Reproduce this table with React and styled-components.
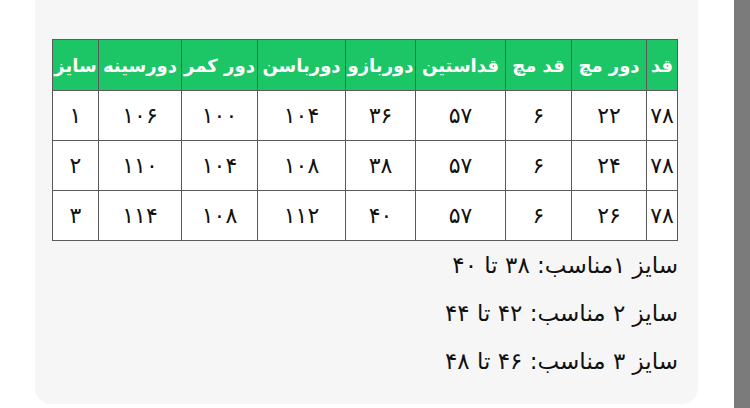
import React from "react";
import styled, { createGlobalStyle } from "styled-components";

const GlobalStyle = createGlobalStyle`
  html, body {
    margin: 0;
    padding: 0;
    background: #ffffff;
  }
  body {
    font-family: "DejaVu Sans", "Noto Sans", sans-serif;
  }
`;

const columns = [
  { title: "قد", width: 31 },
  { title: "دور مچ", width: 75 },
  { title: "قد مچ", width: 66 },
  { title: "قداستین", width: 90 },
  { title: "دوربازو", width: 70 },
  { title: "دورباسن", width: 88 },
  { title: "دور کمر", width: 76 },
  { title: "دورسینه", width: 83 },
  { title: "سایز", width: 46 },
];

const rows = [
  ["۷۸", "۲۲", "۶", "۵۷", "۳۶", "۱۰۴", "۱۰۰", "۱۰۶", "۱"],
  ["۷۸", "۲۴", "۶", "۵۷", "۳۸", "۱۰۸", "۱۰۴", "۱۱۰", "۲"],
  ["۷۸", "۲۶", "۶", "۵۷", "۴۰", "۱۱۲", "۱۰۸", "۱۱۴", "۳"],
];

const notes = [
  "سایز ۱مناسب: ۳۸ تا ۴۰",
  "سایز ۲ مناسب: ۴۲ تا ۴۴",
  "سایز ۳ مناسب: ۴۶ تا ۴۸",
];

const App = () => {
  return (
    <>
      <GlobalStyle />
      <Page>
        <Card dir="rtl">
          <SizeTable>
            <colgroup>
              {columns.map((c) => (
                <col key={c.title} style={{ width: c.width }} />
              ))}
            </colgroup>
            <thead>
              <tr>
                {columns.map((c) => (
                  <HeadCell key={c.title}>{c.title}</HeadCell>
                ))}
              </tr>
            </thead>
            <tbody>
              {rows.map((row, i) => (
                <tr key={i}>
                  {row.map((value, j) => (
                    <Cell key={j}>{value}</Cell>
                  ))}
                </tr>
              ))}
            </tbody>
          </SizeTable>
          <Notes>
            {notes.map((n) => (
              <Note key={n}>{n}</Note>
            ))}
          </Notes>
        </Card>
        <ScrollBar />
      </Page>
    </>
  );
};

const Page = styled.div`
  display: flex;
  height: 408px;
  width: 750px;
  overflow: hidden;
`;

const Card = styled.div`
  width: 663px;
  height: 404px;
  margin-left: 35px;
  box-sizing: border-box;
  padding: 39px 20px 0 18px;
  background: #f6f6f6;
  border-radius: 0 0 16px 16px;
`;

const ScrollBar = styled.div`
  width: 16px;
  margin-left: auto;
  background: #7b7b7b;
`;

const SizeTable = styled.table`
  width: 625px;
  table-layout: fixed;
  border-collapse: collapse;
  background: #ffffff;
`;

const HeadCell = styled.th`
  height: 50px;
  padding: 0;
  border: 1px solid #5a5a5a;
  background: #1cc565;
  color: #ffffff;
  font-size: 18px;
  font-weight: bold;
  white-space: nowrap;
  overflow: visible;
  text-align: center;
`;

const Cell = styled.td`
  height: 49px;
  padding: 0;
  border: 1px solid #5a5a5a;
  color: #111111;
  font-size: 22px;
  text-align: center;
  white-space: nowrap;
`;

const Notes = styled.div`
  display: flex;
  flex-direction: column;
`;

const Note = styled.div`
  height: 48px;
  line-height: 48px;
  font-size: 23px;
  color: #111111;
  text-align: right;
`;

export default App;
